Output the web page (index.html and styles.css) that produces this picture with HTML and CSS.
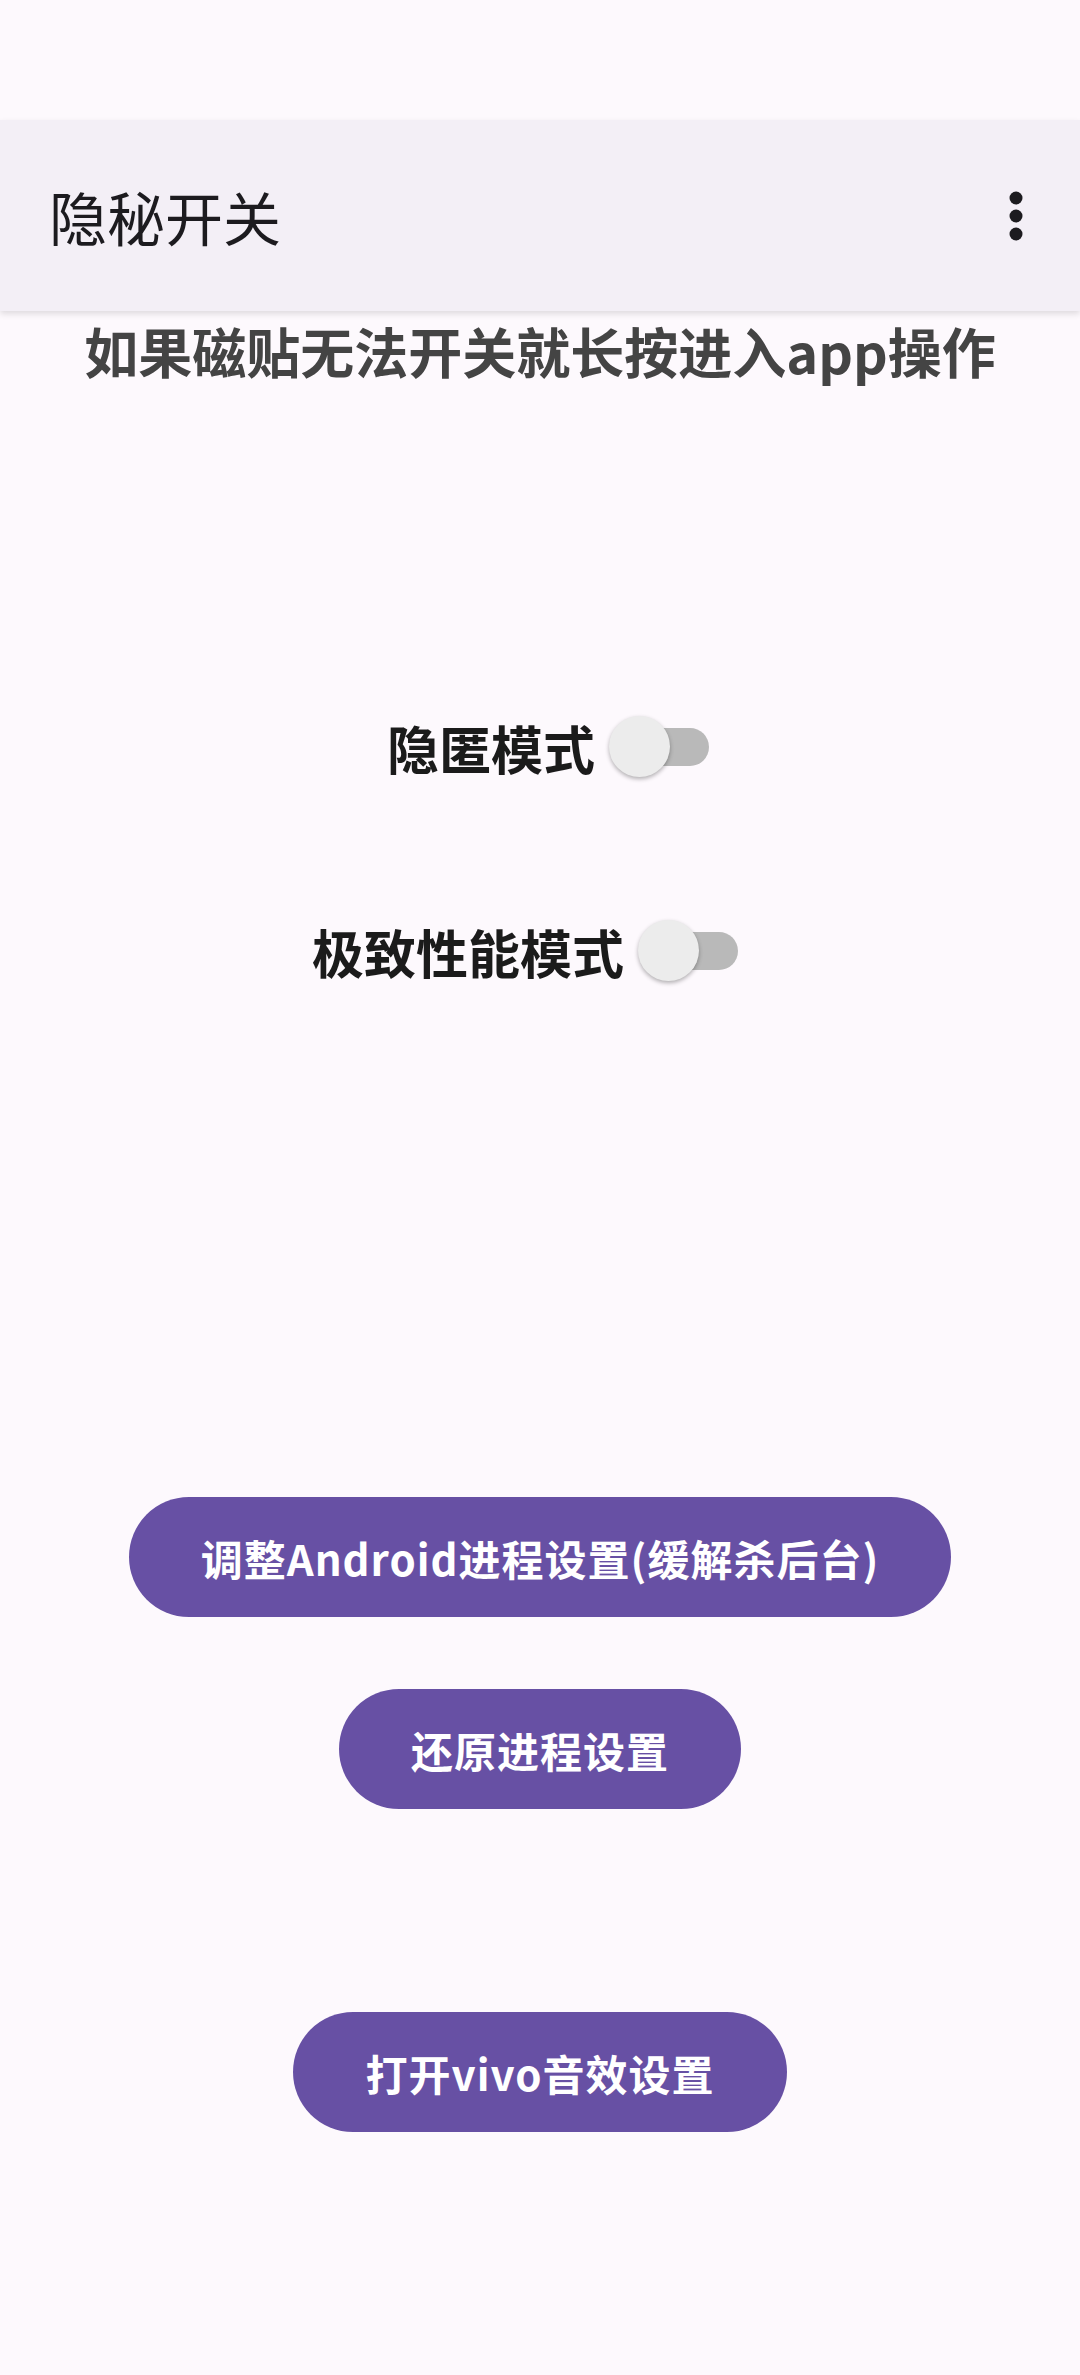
FILE: index.html
```html
<!DOCTYPE html>
<html lang="zh-CN">
<head>
  <meta charset="UTF-8">
  <meta name="viewport" content="width=device-width, initial-scale=1.0">
  <title>隐秘开关</title>
  <link rel="stylesheet" href="styles.css">
</head>
<body>

  <div class="status-bar"></div>

  <!-- 顶部标题栏 -->
  <header class="app-bar">
    <h1 class="app-title">隐秘开关</h1>
    <button class="menu-btn" aria-label="更多">
      <svg width="24" height="60" viewBox="0 0 24 60">
        <circle cx="12" cy="12" r="6.5" fill="#1c1b1f"/>
        <circle cx="12" cy="30" r="6.5" fill="#1c1b1f"/>
        <circle cx="12" cy="48" r="6.5" fill="#1c1b1f"/>
      </svg>
    </button>
  </header>

  <main class="content">
    <p class="tip">如果磁贴无法开关就长按进入app操作</p>

    <!-- 开关 -->
    <label class="switch-row row-hide">
      <span class="switch-label">隐匿模式</span>
      <span class="switch"><span class="track"></span><span class="thumb"></span></span>
    </label>

    <label class="switch-row row-perf">
      <span class="switch-label">极致性能模式</span>
      <span class="switch"><span class="track"></span><span class="thumb"></span></span>
    </label>

    <!-- 操作按钮 -->
    <button class="pill-btn btn-adjust">调整Android进程设置(缓解杀后台)</button>
    <button class="pill-btn btn-restore">还原进程设置</button>
    <button class="pill-btn btn-vivo">打开vivo音效设置</button>
  </main>

</body>
</html>
```

FILE: styles.css
```css
body, html {
  margin: 0;
  padding: 0;
  width: 1080px;
  height: 2375px;
  overflow: hidden;
  font-family: 'Noto Sans CJK SC', 'Noto Sans', sans-serif;
  background-color: #fdf9fd;
  color: #1c1b1f;
}

.status-bar {
  height: 120px;
}

.app-bar {
  position: relative;
  z-index: 2;
  height: 191px;
  display: flex;
  align-items: center;
  justify-content: space-between;
  padding: 0 40px 0 49px;
  background: #f3eff6;
  box-shadow: 0 3px 6px rgba(0,0,0,0.12);
}

.app-title {
  margin: 0;
  font-size: 58px;
  font-weight: 400;
  color: #1c1b1f;
}

.menu-btn {
  background: none;
  border: none;
  padding: 0;
  width: 48px;
  display: flex;
  justify-content: center;
}

.content {
  display: flex;
  flex-direction: column;
  align-items: center;
}

.tip {
  margin: 0;
  line-height: 80px;
  font-size: 54px;
  font-weight: 700;
  color: #444444;
  text-align: center;
}

.switch-row {
  display: flex;
  align-items: center;
  height: 80px;
  gap: 14px;
}

.row-hide {
  margin-top: 316px;
  margin-left: 16px;
}

.row-perf {
  margin-top: 124px;
  margin-left: -30px;
}

.switch-label {
  font-size: 52px;
  font-weight: 700;
  color: #1b1b1b;
}

.switch {
  position: relative;
  width: 100px;
  height: 64px;
}

.switch .track {
  position: absolute;
  right: 0;
  top: 13px;
  width: 94px;
  height: 38px;
  border-radius: 19px;
  background: #b9b9b9;
}

.switch .thumb {
  position: absolute;
  left: 0;
  top: 1px;
  width: 61px;
  height: 61px;
  border-radius: 50%;
  background: #ececec;
  box-shadow: 0 2px 4px rgba(0,0,0,0.3);
}

.pill-btn {
  height: 120px;
  padding: 0 72px;
  border: none;
  border-radius: 60px;
  background: #6750a4;
  color: #ffffff;
  font-family: 'Noto Sans CJK SC', 'Noto Sans', sans-serif;
  font-size: 42px;
  font-weight: 700;
  letter-spacing: 1px;
  cursor: pointer;
}

.btn-adjust {
  margin-top: 506px;
}

.btn-restore {
  margin-top: 72px;
}

.btn-vivo {
  margin-top: 203px;
}
```
